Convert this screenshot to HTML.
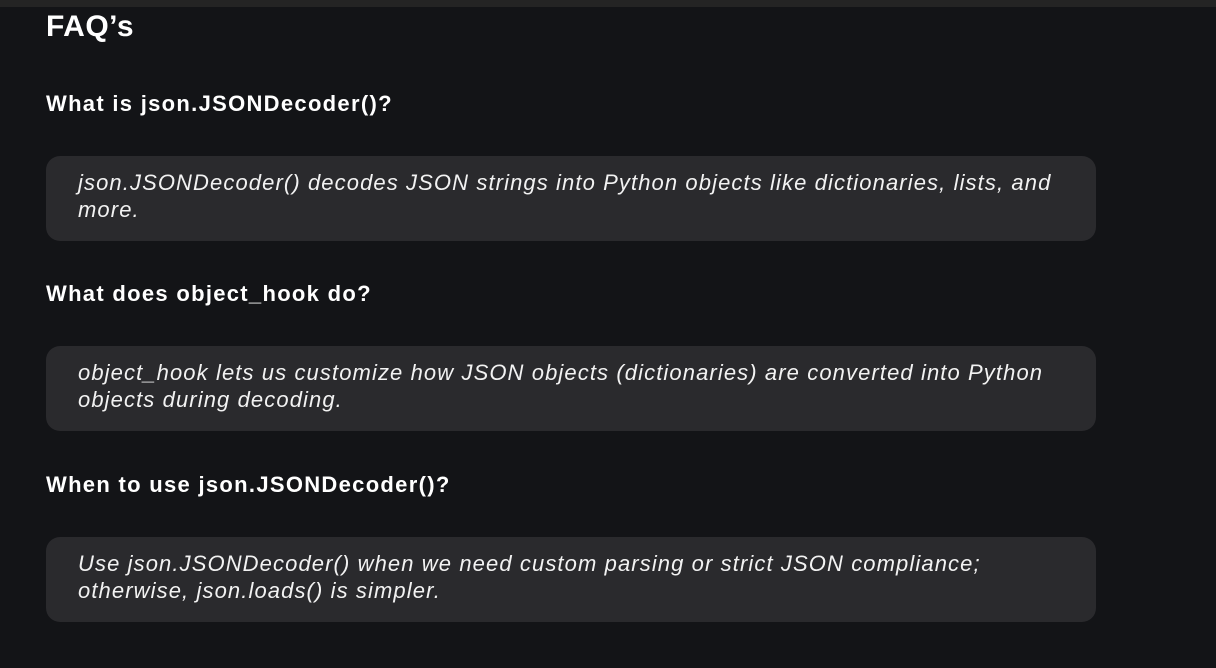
<!DOCTYPE html>
<html><head><meta charset="utf-8"><style>
html,body{margin:0;padding:0;}
body{width:1216px;height:668px;background:#131417;overflow:hidden;font-family:"Liberation Sans",sans-serif;color:#fff;position:relative;}
.top{position:absolute;left:0;top:0;width:1216px;height:7px;background:#242424;}
h2{position:absolute;left:46px;top:7px;margin:0;font-size:30px;font-weight:bold;line-height:40px;letter-spacing:0.5px;}
.q{position:absolute;left:46px;margin:0;font-size:22px;font-weight:bold;line-height:26px;letter-spacing:1.3px;}
.a{position:absolute;left:46px;width:1050px;height:85px;background:#2a2a2d;border-radius:14px;box-sizing:border-box;padding:13px 0 0 32px;font-style:italic;font-size:22px;line-height:27px;color:#f2f2f2;white-space:nowrap;letter-spacing:1.1px;}
</style></head><body>
<div class="top"></div>
<h2>FAQ’s</h2>
<p class="q" style="top:91px">What is json.JSONDecoder()?</p>
<div class="a" style="top:156px">json.JSONDecoder() decodes JSON strings into Python objects like dictionaries, lists, and<br>more.</div>
<p class="q" style="top:281px">What does object_hook do?</p>
<div class="a" style="top:346px">object_hook lets us customize how JSON objects (dictionaries) are converted into Python<br>objects during decoding.</div>
<p class="q" style="top:472px">When to use json.JSONDecoder()?</p>
<div class="a" style="top:537px">Use json.JSONDecoder() when we need custom parsing or strict JSON compliance;<br>otherwise, json.loads() is simpler.</div>
</body></html>
